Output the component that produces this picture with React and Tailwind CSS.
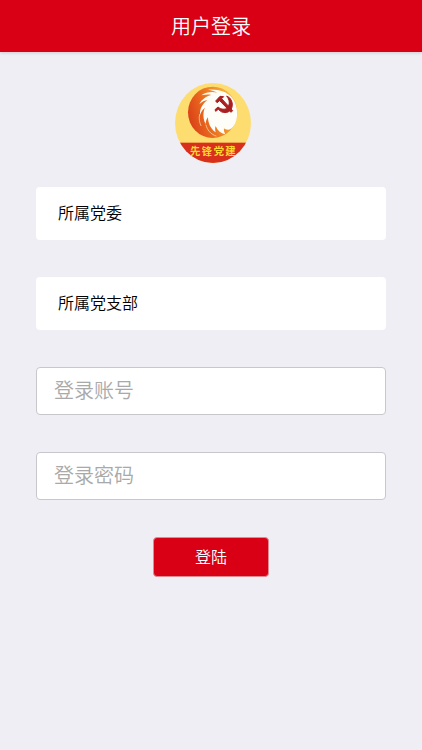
function Logo() {
  return (
    <svg viewBox="17 24 240 240" className="size-20" role="img" aria-label="先锋党建">
      <defs>
        <clipPath id="badge">
          <ellipse cx="143" cy="144" rx="114" ry="120" />
        </clipPath>
        <linearGradient id="flame" x1="0" y1="0.6" x2="1" y2="0.3">
          <stop offset="0" stopColor="#d9401a" />
          <stop offset="0.3" stopColor="#e8641c" />
          <stop offset="0.7" stopColor="#f39a2c" />
          <stop offset="1" stopColor="#fbc850" />
        </linearGradient>
      </defs>
      <g clipPath="url(#badge)">
        <rect x="29" y="24" width="228" height="240" fill="#fedd70" />
        <rect x="29" y="203" width="228" height="61" fill="#d8301c" />
      </g>
      <ellipse cx="142" cy="112" rx="74" ry="77" fill="url(#flame)" />
      <path
        fill="#fffdf8"
        d="M198 66C184 50 158 41 128 44C140 46 149 49 155 53C138 49 122 52 108 61C121 58 131 58 138 60C122 64 108 74 102 88C110 80 118 76 126 75C112 86 103 101 104 119C108 109 113 102 119 98C112 112 113 133 121 147C122 137 124 131 128 127C128 144 136 162 151 172C149 164 149 158 151 153C156 166 166 175 180 178C176 171 175 165 176 160C183 166 192 166 200 159C209 150 214 138 215 124C217 102 211 80 198 66Z"
      />
      <path
        d="M122 150C125 164 136 178 152 183M103 118C100 130 102 142 107 152"
        fill="none"
        stroke="#ffe9c0"
        strokeWidth="2"
        strokeLinecap="round"
      />
      <g fill="#a91f22" stroke="#a91f22" strokeWidth="3" strokeLinejoin="round">
        <path d="M184 63C203 70 206 97 193 108C181 117 166 112 159 103L151 109L149 104L158 96C168 104 179 105 186 98C195 89 193 74 184 63Z" />
        <path d="M151 78L164 64L175 65L169 71L202 107L197 112L163 77L155 83Z" />
      </g>
      <text
        x="74 109 145 180"
        y="240"
        fontSize="31"
        fill="#ffd92e"
        className="font-['Noto_Sans_CJK_SC',sans-serif] font-bold"
      >
        先锋党建
      </text>
    </svg>
  );
}

function Picker({ label }) {
  return (
    <select
      aria-label={label}
      className="h-[53px] w-full appearance-none rounded bg-white px-[22px] pb-1 text-[16px] text-black outline-none"
    >
      <option>{label}</option>
    </select>
  );
}

function Field({ label, type }) {
  return (
    <input
      type={type}
      aria-label={label}
      placeholder={label}
      className="h-12 w-full rounded border border-[#c8c8cc] bg-white px-[17px] pb-1 text-[20px] text-black outline-none placeholder:text-[#a9a9a9]"
    />
  );
}

export default function App() {
  return (
    <div className="min-h-screen bg-[#efeef4] font-['Noto_Sans_CJK_SC',sans-serif] font-[350]">
      <header className="flex h-[52px] items-center justify-center bg-[#d90015] shadow-[0_1px_3px_rgba(0,0,0,0.15)]">
        <h1 className="text-[20px] text-white">用户登录</h1>
      </header>
      <main className="flex flex-col items-center px-9 pt-[31px]">
        <Logo />
        <form className="mt-6 flex w-full flex-col items-center gap-[37px]" onSubmit={(e) => e.preventDefault()}>
          <Picker label="所属党委" />
          <Picker label="所属党支部" />
          <Field label="登录账号" type="text" />
          <Field label="登录密码" type="password" />
          <button
            type="submit"
            className="h-10 w-[116px] rounded border border-[#e08a94] bg-[#d90015] pb-0.5 text-[16px] text-white"
          >
            登陆
          </button>
        </form>
      </main>
    </div>
  );
}
